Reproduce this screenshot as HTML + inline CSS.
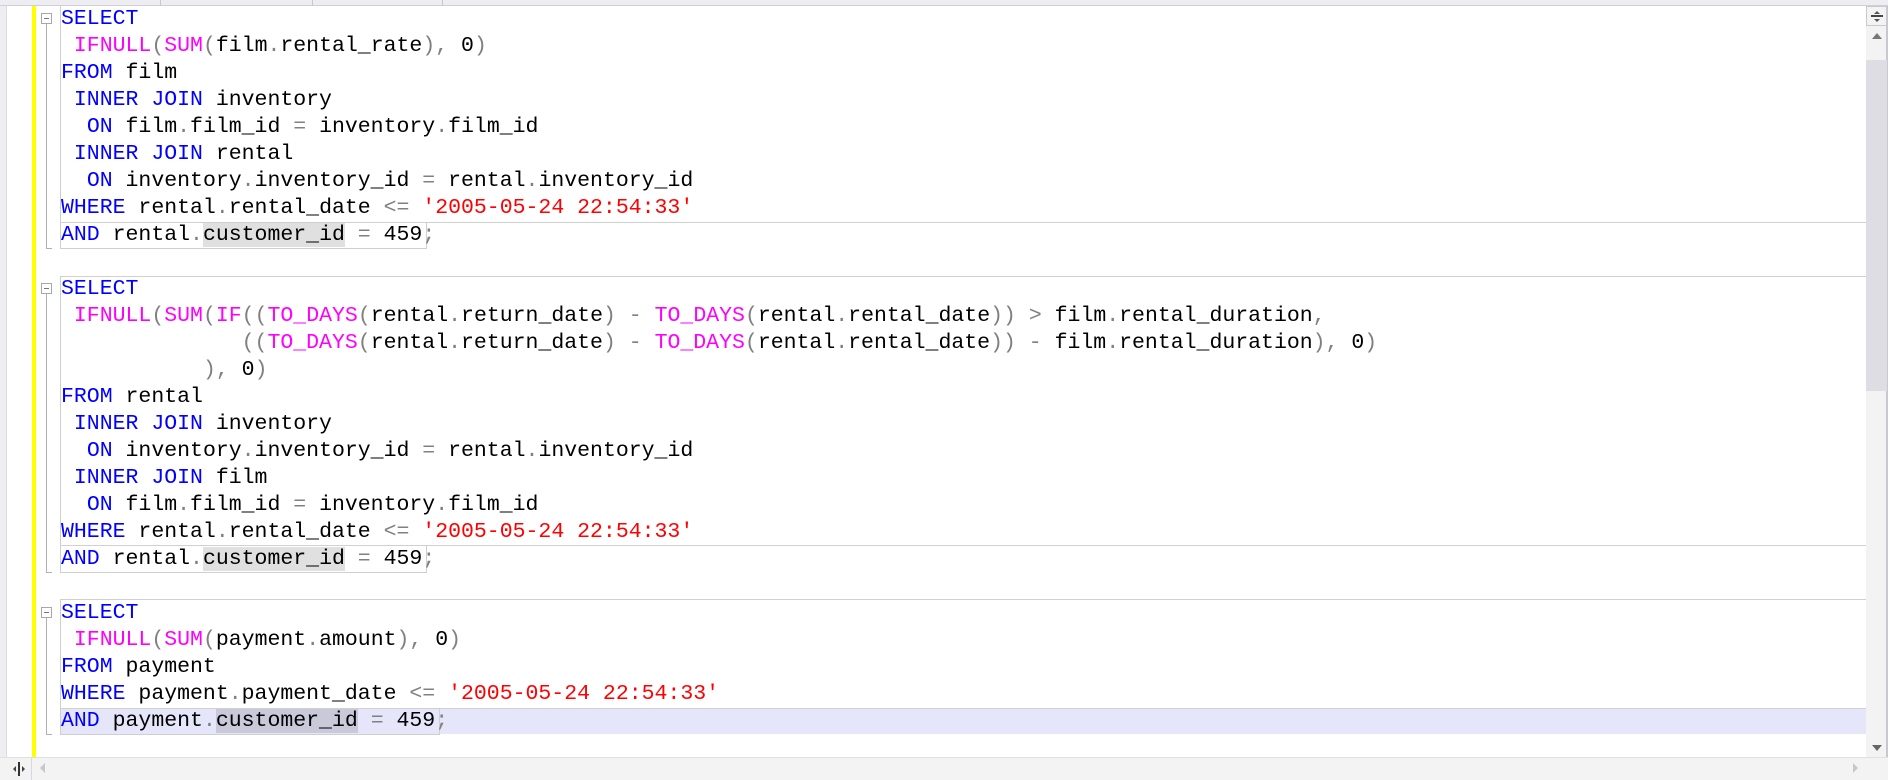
<!DOCTYPE html>
<html><head><meta charset="utf-8"><style>
*{margin:0;padding:0;box-sizing:border-box}
html,body{width:1888px;height:780px;overflow:hidden;background:#fff}
body{position:relative;font-family:"Liberation Mono","DejaVu Sans Mono",monospace;font-size:21.5px;color:#000}
.top{position:absolute;left:0;top:0;width:1888px;height:6px;background:#eeeef2;border-bottom:1px solid #cfcfd6}
.tab{position:absolute;top:0;width:1px;height:6px;background:#c8c8d0}
.lg{position:absolute;left:0;top:6px;width:7px;height:752px;background:#eeeef2;border-right:1px solid #dcdce2}
.yb{position:absolute;left:32px;top:6px;width:4px;height:751px;background:#ffff00}
.row{position:absolute;left:61px;height:27px;line-height:27px;white-space:pre}
.k{color:#0000ff}.f{color:#ff00ff}.s{color:#ff0000}.p{color:#808080}
.hl{background:#e0e0e0}
.hl2{background:#c9c9d9}
.hline{position:absolute;left:60px;width:1806px;height:1px;background:#d0d0d0}
.vline{position:absolute;width:1px;background:#cfcfcf}
.fold{position:absolute;left:41px;width:11px;height:11px;border:1px solid #a8a8a8;background:#fff}
.fold:after{content:"";position:absolute;left:2px;top:4px;width:5px;height:1px;background:#777}
.ft{position:absolute;left:46px;width:1px;background:#b0b0b0}
.fb{position:absolute;left:46px;width:6px;height:1px;background:#b0b0b0}
.cur{position:absolute;left:60px;top:709px;width:1806px;height:25px;background:#e6e6fa}
.vs{position:absolute;left:1866px;top:6px;width:22px;height:752px;background:#f3f3f3;border-right:2px solid #c8c8d0}
.thumb{position:absolute;left:1866px;top:60px;width:21px;height:331px;background:#dddde3}
.hs{position:absolute;left:0;top:757px;width:1888px;height:23px;background:#f3f3f3;border-top:1px solid #e0e0e4}
</style></head><body>
<div class="top"></div>
<div class="tab" style="left:160px"></div><div class="tab" style="left:312px"></div><div class="tab" style="left:442px"></div>
<div class="lg"></div>
<div class="yb"></div>

<div class="cur"></div>
<div class="hline" style="top:222px"></div>
<div class="hline" style="top:276px"></div>
<div class="hline" style="top:545px"></div>
<div class="hline" style="top:599px"></div>
<div class="hline" style="top:708px"></div>
<div class="vline" style="left:60px;top:6px;height:243px"></div>
<div class="vline" style="left:60px;top:276px;height:297px"></div>
<div class="vline" style="left:60px;top:599px;height:136px"></div>
<div style="position:absolute;left:60px;top:248px;width:367px;height:1px;background:#cfcfcf"></div>
<div class="vline" style="left:426px;top:222px;height:27px"></div>
<div style="position:absolute;left:60px;top:572px;width:367px;height:1px;background:#cfcfcf"></div>
<div class="vline" style="left:426px;top:545px;height:28px"></div>
<div style="position:absolute;left:60px;top:734px;width:380px;height:1px;background:#cfcfcf"></div>
<div class="vline" style="left:439px;top:708px;height:27px"></div>

<div class="ft" style="top:24px;height:224px"></div><div class="fb" style="top:248px"></div>
<div class="fold" style="top:13px"></div>
<div class="ft" style="top:294px;height:278px"></div><div class="fb" style="top:572px"></div>
<div class="fold" style="top:283px"></div>
<div class="ft" style="top:618px;height:116px"></div><div class="fb" style="top:734px"></div>
<div class="fold" style="top:607px"></div>

<div class="row" style="top:6px"><span class="k">SELECT</span></div>
<div class="row" style="top:33px"> <span class="f">IFNULL</span><span class="p">(</span><span class="f">SUM</span><span class="p">(</span>film<span class="p">.</span>rental_rate<span class="p">),</span> 0<span class="p">)</span></div>
<div class="row" style="top:60px"><span class="k">FROM</span> film</div>
<div class="row" style="top:87px"> <span class="k">INNER JOIN</span> inventory</div>
<div class="row" style="top:114px">  <span class="k">ON</span> film<span class="p">.</span>film_id <span class="p">=</span> inventory<span class="p">.</span>film_id</div>
<div class="row" style="top:141px"> <span class="k">INNER JOIN</span> rental</div>
<div class="row" style="top:168px">  <span class="k">ON</span> inventory<span class="p">.</span>inventory_id <span class="p">=</span> rental<span class="p">.</span>inventory_id</div>
<div class="row" style="top:195px"><span class="k">WHERE</span> rental<span class="p">.</span>rental_date <span class="p">&lt;=</span> <span class="s">'2005-05-24 22:54:33'</span></div>
<div class="row" style="top:222px"><span class="k">AND</span> rental<span class="p">.</span><span class="hl">customer_id</span> <span class="p">=</span> 459<span class="p">;</span></div>

<div class="row" style="top:276px"><span class="k">SELECT</span></div>
<div class="row" style="top:303px"> <span class="f">IFNULL</span><span class="p">(</span><span class="f">SUM</span><span class="p">(</span><span class="f">IF</span><span class="p">((</span><span class="f">TO_DAYS</span><span class="p">(</span>rental<span class="p">.</span>return_date<span class="p">)</span> <span class="p">-</span> <span class="f">TO_DAYS</span><span class="p">(</span>rental<span class="p">.</span>rental_date<span class="p">))</span> <span class="p">&gt;</span> film<span class="p">.</span>rental_duration<span class="p">,</span></div>
<div class="row" style="top:330px">              <span class="p">((</span><span class="f">TO_DAYS</span><span class="p">(</span>rental<span class="p">.</span>return_date<span class="p">)</span> <span class="p">-</span> <span class="f">TO_DAYS</span><span class="p">(</span>rental<span class="p">.</span>rental_date<span class="p">))</span> <span class="p">-</span> film<span class="p">.</span>rental_duration<span class="p">),</span> 0<span class="p">)</span></div>
<div class="row" style="top:357px">           <span class="p">),</span> 0<span class="p">)</span></div>
<div class="row" style="top:384px"><span class="k">FROM</span> rental</div>
<div class="row" style="top:411px"> <span class="k">INNER JOIN</span> inventory</div>
<div class="row" style="top:438px">  <span class="k">ON</span> inventory<span class="p">.</span>inventory_id <span class="p">=</span> rental<span class="p">.</span>inventory_id</div>
<div class="row" style="top:465px"> <span class="k">INNER JOIN</span> film</div>
<div class="row" style="top:492px">  <span class="k">ON</span> film<span class="p">.</span>film_id <span class="p">=</span> inventory<span class="p">.</span>film_id</div>
<div class="row" style="top:519px"><span class="k">WHERE</span> rental<span class="p">.</span>rental_date <span class="p">&lt;=</span> <span class="s">'2005-05-24 22:54:33'</span></div>
<div class="row" style="top:546px"><span class="k">AND</span> rental<span class="p">.</span><span class="hl">customer_id</span> <span class="p">=</span> 459<span class="p">;</span></div>

<div class="row" style="top:600px"><span class="k">SELECT</span></div>
<div class="row" style="top:627px"> <span class="f">IFNULL</span><span class="p">(</span><span class="f">SUM</span><span class="p">(</span>payment<span class="p">.</span>amount<span class="p">),</span> 0<span class="p">)</span></div>
<div class="row" style="top:654px"><span class="k">FROM</span> payment</div>
<div class="row" style="top:681px"><span class="k">WHERE</span> payment<span class="p">.</span>payment_date <span class="p">&lt;=</span> <span class="s">'2005-05-24 22:54:33'</span></div>
<div class="row" style="top:708px"><span class="k">AND</span> payment<span class="p">.</span><span class="hl2">customer_id</span> <span class="p">=</span> 459<span class="p">;</span></div>

<div class="vs"></div>
<div class="thumb"></div>
<div style="position:absolute;left:1866px;top:6px;width:21px;height:20px;border:1px solid #c8c8d0;background:#f3f3f3"></div>
<div style="position:absolute;left:1871px;top:15px;width:12px;height:2px;background:#444"></div>
<div style="position:absolute;left:1874px;top:11px;width:0;height:0;border-left:3px solid transparent;border-right:3px solid transparent;border-bottom:3px solid #555"></div>
<div style="position:absolute;left:1874px;top:19px;width:0;height:0;border-left:3px solid transparent;border-right:3px solid transparent;border-top:3px solid #555"></div>
<div style="position:absolute;left:1872px;top:33px;width:0;height:0;border-left:5px solid transparent;border-right:5px solid transparent;border-bottom:6px solid #777"></div>
<div style="position:absolute;left:1872px;top:745px;width:0;height:0;border-left:5px solid transparent;border-right:5px solid transparent;border-top:6px solid #666"></div>

<div class="hs"></div>
<div style="position:absolute;left:7px;top:758px;width:25px;height:22px;border-right:1px solid #d8d8de"></div>
<div style="position:absolute;left:18px;top:762px;width:2px;height:14px;background:#333"></div>
<div style="position:absolute;left:13px;top:766px;width:0;height:0;border-top:3px solid transparent;border-bottom:3px solid transparent;border-right:3px solid #444"></div>
<div style="position:absolute;left:22px;top:766px;width:0;height:0;border-top:3px solid transparent;border-bottom:3px solid transparent;border-left:3px solid #444"></div>
<div style="position:absolute;left:40px;top:763px;width:0;height:0;border-top:5px solid transparent;border-bottom:5px solid transparent;border-right:5px solid #c8c8c8"></div>
<div style="position:absolute;left:1853px;top:763px;width:0;height:0;border-top:5px solid transparent;border-bottom:5px solid transparent;border-left:5px solid #c8c8c8"></div>
</body></html>
